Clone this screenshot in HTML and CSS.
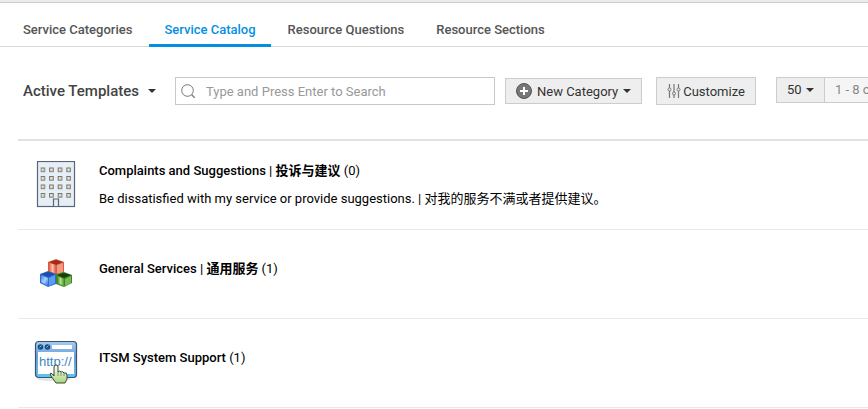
FILE: index.html
```
<!DOCTYPE html>
<html lang="en">

<head>
    <meta charset="UTF-8">
    <meta name="viewport" content="width=device-width, initial-scale=1.0">
    <title>Service Catalog</title>
    <link rel="stylesheet" href="styles.css">
</head>

<body>
    <div class="top-strip"></div>

    <nav class="tabs">
        <a class="tab" href="#categories">Service Categories</a>
        <a class="tab active" href="#catalog">Service Catalog</a>
        <a class="tab" href="#questions">Resource Questions</a>
        <a class="tab" href="#sections">Resource Sections</a>
    </nav>

    <main class="content">
        <div class="toolbar">
            <div class="dropdown filter">
                <select aria-label="Template filter">
                    <option>Active Templates</option>
                </select>
                <svg class="caret" width="8" height="4" viewBox="0 0 8 4"><path d="M0 0h8L4 4z"/></svg>
            </div>

            <div class="search">
                <svg width="15" height="15" viewBox="0 0 15 15" fill="none" stroke="#777"><circle cx="6.5" cy="6.5" r="5.8"/><path d="M10.7 10.7l3 3" stroke-width="1.3"/></svg>
                <input type="text" aria-label="Search" placeholder="Type and Press Enter to Search">
            </div>

            <button class="btn new-category" type="button">
                <svg width="16" height="16" viewBox="0 0 16 16"><circle cx="8" cy="8" r="7.5" fill="#777" stroke="#555"/><path d="M8 4v8M4 8h8" stroke="#fff" stroke-width="2"/></svg>
                <span>New Category</span>
                <svg class="caret" width="8" height="4" viewBox="0 0 8 4"><path d="M0 0h8L4 4z"/></svg>
            </button>

            <button class="btn customize" type="button">
                <svg width="14" height="15" viewBox="0 0 14 15" fill="none" stroke="#777"><path d="M2.5 0v4M2.5 7v7M7 0v8M7 11v3M11.5 0v4M11.5 7v7" stroke-width="1.2"/><circle cx="2.5" cy="5.5" r="1.5"/><circle cx="7" cy="9.5" r="1.5"/><circle cx="11.5" cy="5.5" r="1.5"/></svg>
                <span>Customize</span>
            </button>

            <div class="pager">
                <div class="dropdown page-size">
                    <select aria-label="Rows per page">
                        <option>50</option>
                    </select>
                    <svg class="caret" width="8" height="4" viewBox="0 0 8 4"><path d="M0 0h8L4 4z"/></svg>
                </div>
                <span class="range">1 - 8 of 8</span>
            </div>
        </div>

        <ul class="catalog">
            <li class="item">
                <div class="item-icon">
                    <svg width="40" height="48" viewBox="0 0 40 48">
                        <defs>
                            <pattern id="windows" x="4.5" y="6.5" width="8.6" height="8.5" patternUnits="userSpaceOnUse">
                                <rect x=".5" y=".5" width="3.6" height="3.6" fill="#ffe3b0" stroke="#6a7180" stroke-width="1"/>
                            </pattern>
                        </defs>
                        <rect x="1.5" y=".5" width="37" height="45" fill="#e6eff5" stroke="#5b6478" stroke-width="1.2"/>
                        <rect x="4.5" y="5.5" width="31" height="32" fill="url(#windows)"/>
                        <path d="M17.5 45v-7h5v7" fill="#e6eff5" stroke="#5b6478" stroke-width="1.2"/>
                    </svg>
                </div>
                <div class="item-text">
                    <p class="title"><a href="#complaints">Complaints and Suggestions | <b lang="zh">投诉与建议</b></a> (0)</p>
                    <p class="description">Be dissatisfied with my service or provide suggestions. | 对我的服务不满或者提供建议。</p>
                </div>
            </li>

            <li class="item">
                <div class="item-icon">
                    <svg width="34" height="30" viewBox="0 0 34 30">
                        <defs>
                            <linearGradient id="red" x2="1"><stop offset="0" stop-color="#e2573c"/><stop offset=".5" stop-color="#ffc2ad"/><stop offset="1" stop-color="#dd5238"/></linearGradient>
                            <linearGradient id="blue" x2="1" y2="1"><stop offset="0" stop-color="#3a78d8"/><stop offset=".5" stop-color="#a4d2ff"/><stop offset="1" stop-color="#2e6fd4"/></linearGradient>
                            <linearGradient id="green" x2="1"><stop offset="0" stop-color="#397b1d"/><stop offset=".5" stop-color="#b2df91"/><stop offset="1" stop-color="#4d9a2a"/></linearGradient>
                        </defs>
                        <path d="M9 3l8-3 8 3v11l-8 3-8-4z" fill="#dd5a40"/>
                        <path d="M10 3l7-2 7 2-7 3z" fill="#a02c1b"/>
                        <path d="M10 4l7 2v9l-7-3z" fill="url(#red)"/>
                        <path d="M18 6l6-2v9l-6 3z" fill="#f19a82"/>
                        <path d="M1 15l8-3 8 3v10l-8 3-8-4z" fill="#2e6bd0"/>
                        <path d="M2 15l7-2 7 2-7 3z" fill="#1d4cab"/>
                        <path d="M2 16l7 3v8l-7-4z" fill="url(#blue)"/>
                        <path d="M10 19l6-3v8l-6 3z" fill="#5b9cf0"/>
                        <path d="M17 15l8-2 8 3v8l-8 4-8-3z" fill="#3f8423"/>
                        <path d="M18 16l7-2 7 2-7 3z" fill="#183e10"/>
                        <path d="M18 17l7 3v7l-7-3z" fill="url(#green)"/>
                        <path d="M26 20l6-3v7l-6 3z" fill="#77b952"/>
                    </svg>
                </div>
                <div class="item-text">
                    <p class="title"><a href="#general">General Services | <b lang="zh">通用服务</b></a> (1)</p>
                    <p class="description"></p>
                </div>
            </li>

            <li class="item">
                <div class="item-icon">
                    <svg width="44" height="46" viewBox="0 0 44 46">
                        <defs>
                            <linearGradient id="frame" x2="0" y2="1"><stop offset="0" stop-color="#a9ccef"/><stop offset=".4" stop-color="#6aa0dc"/><stop offset="1" stop-color="#5cc5f2"/></linearGradient>
                            <linearGradient id="hand" x2="0" y2="1"><stop offset="0" stop-color="#fff"/><stop offset="1" stop-color="#a9d67c"/></linearGradient>
                        </defs>
                        <ellipse cx="20" cy="39" rx="17" ry="2" fill="#e4e4e4"/>
                        <rect x="1.5" y="1.5" width="41" height="36" rx="3" fill="url(#frame)" stroke="#3b5270" stroke-width="1.2"/>
                        <rect x="4" y="12" width="36" height="22" fill="#fff"/>
                        <circle cx="6.5" cy="7" r="2.8" fill="#174e83"/>
                        <circle cx="13.5" cy="7" r="2.8" fill="#174e83"/>
                        <path d="M5.5 7.5l2-2M12.5 7.5l2-2" stroke="#7bd1f7"/>
                        <rect x="18" y="5" width="20" height="4" fill="#fff"/>
                        <text class="url-label" x="5" y="26">http://</text>
                        <path d="M20 27q0-2 2-2t2 2v5q2-2 3 0 2-1 3 1 3-1 3 2v4l-2 4H22l-5-7q-2-3 0-3l3 3z" fill="url(#hand)" stroke="#3d4832"/>
                        <path d="M24 32v4M27 32v4M30 33v3" stroke="#596546" stroke-width=".7"/>
                    </svg>
                </div>
                <div class="item-text">
                    <p class="title"><a href="#itsm">ITSM System Support</a> (1)</p>
                    <p class="description"></p>
                </div>
            </li>
        </ul>
    </main>
</body>

</html>
```

FILE: styles.css
```
* {
    margin: 0;
    padding: 0;
    box-sizing: border-box;
}

body {
    background: #fff;
    color: #000;
    font-family: Roboto, "Noto Sans CJK SC", sans-serif;
    font-size: 13px;
    overflow-x: hidden;
}

svg {
    display: block;
    flex-shrink: 0;
}

button,
input,
select {
    font: inherit;
    color: inherit;
}

.top-strip {
    height: 3px;
    background: #ececec;
    border-bottom: 1px solid #ccc;
}

.tabs {
    display: flex;
    gap: 2px;
    height: 44px;
    padding-left: 8px;
    border-bottom: 1px solid #d9d9d9;
}

.tab {
    height: 44px;
    padding: 0 15px;
    line-height: 53px;
    font-weight: 500;
    color: #555;
    text-decoration: none;
    white-space: nowrap;
}

.tab.active {
    color: #048fe3;
    border-bottom: 3px solid #048fe3;
}

.content {
    padding-left: 18px;
}

/* Toolbar */
.toolbar {
    display: flex;
    align-items: center;
    padding: 30px 0 34px;
    border-bottom: 2px solid #e1e1e1;
    white-space: nowrap;
}

.toolbar > * {
    flex-shrink: 0;
}

.caret {
    fill: #333;
}

.dropdown {
    display: grid;
    align-items: center;
}

.dropdown select,
.dropdown .caret {
    grid-area: 1 / 1;
}

.dropdown select {
    appearance: none;
    background: transparent;
    border: none;
    cursor: pointer;
}

.dropdown .caret {
    justify-self: end;
    pointer-events: none;
}

.filter {
    margin: 0 19px 0 5px;
    font-size: 15px;
    font-weight: 500;
    color: #444;
}

.filter select {
    padding-right: 16px;
}

.search {
    display: flex;
    align-items: center;
    gap: 10px;
    width: 320px;
    height: 28px;
    margin-right: 10px;
    padding: 0 5px;
    border: 1px solid #c8c8c8;
}

.search input {
    flex: 1;
    border: none;
    outline: none;
    background: transparent;
}

.search input::placeholder {
    color: #999;
}

.btn {
    display: flex;
    align-items: center;
    height: 28px;
    padding: 0 10px;
    background: #eee;
    border: 1px solid #ccc;
    color: #333;
    cursor: pointer;
}

.new-category {
    gap: 5px;
    height: 26px;
    margin-right: 14px;
}

.customize {
    gap: 2px;
    margin-right: 20px;
}

.pager {
    display: flex;
    align-self: flex-start;
    height: 26px;
    border: 1px solid #ccc;
    line-height: 24px;
}

.page-size {
    padding: 0 10px;
    background: #eee;
    border-right: 1px solid #ccc;
    color: #333;
}

.page-size select {
    padding-right: 12px;
}

.range {
    padding: 0 10px;
    background: #f5f5f5;
    color: #888;
}

/* Catalog list */
.catalog {
    list-style: none;
}

.item {
    display: flex;
    align-items: center;
    gap: 5px;
    min-height: 89px;
    border-bottom: 1px solid #eaeaea;
}

.item-icon {
    display: flex;
    justify-content: center;
    width: 76px;
}

.item-text {
    line-height: 28px;
}

.title a {
    color: inherit;
    font-weight: 500;
    text-decoration: none;
}

.title b {
    font-weight: 700;
}

.description {
    min-height: 10px;
}

.url-label {
    font-family: "Liberation Sans", sans-serif;
    font-size: 13px;
    fill: #3f84c5;
}
```
